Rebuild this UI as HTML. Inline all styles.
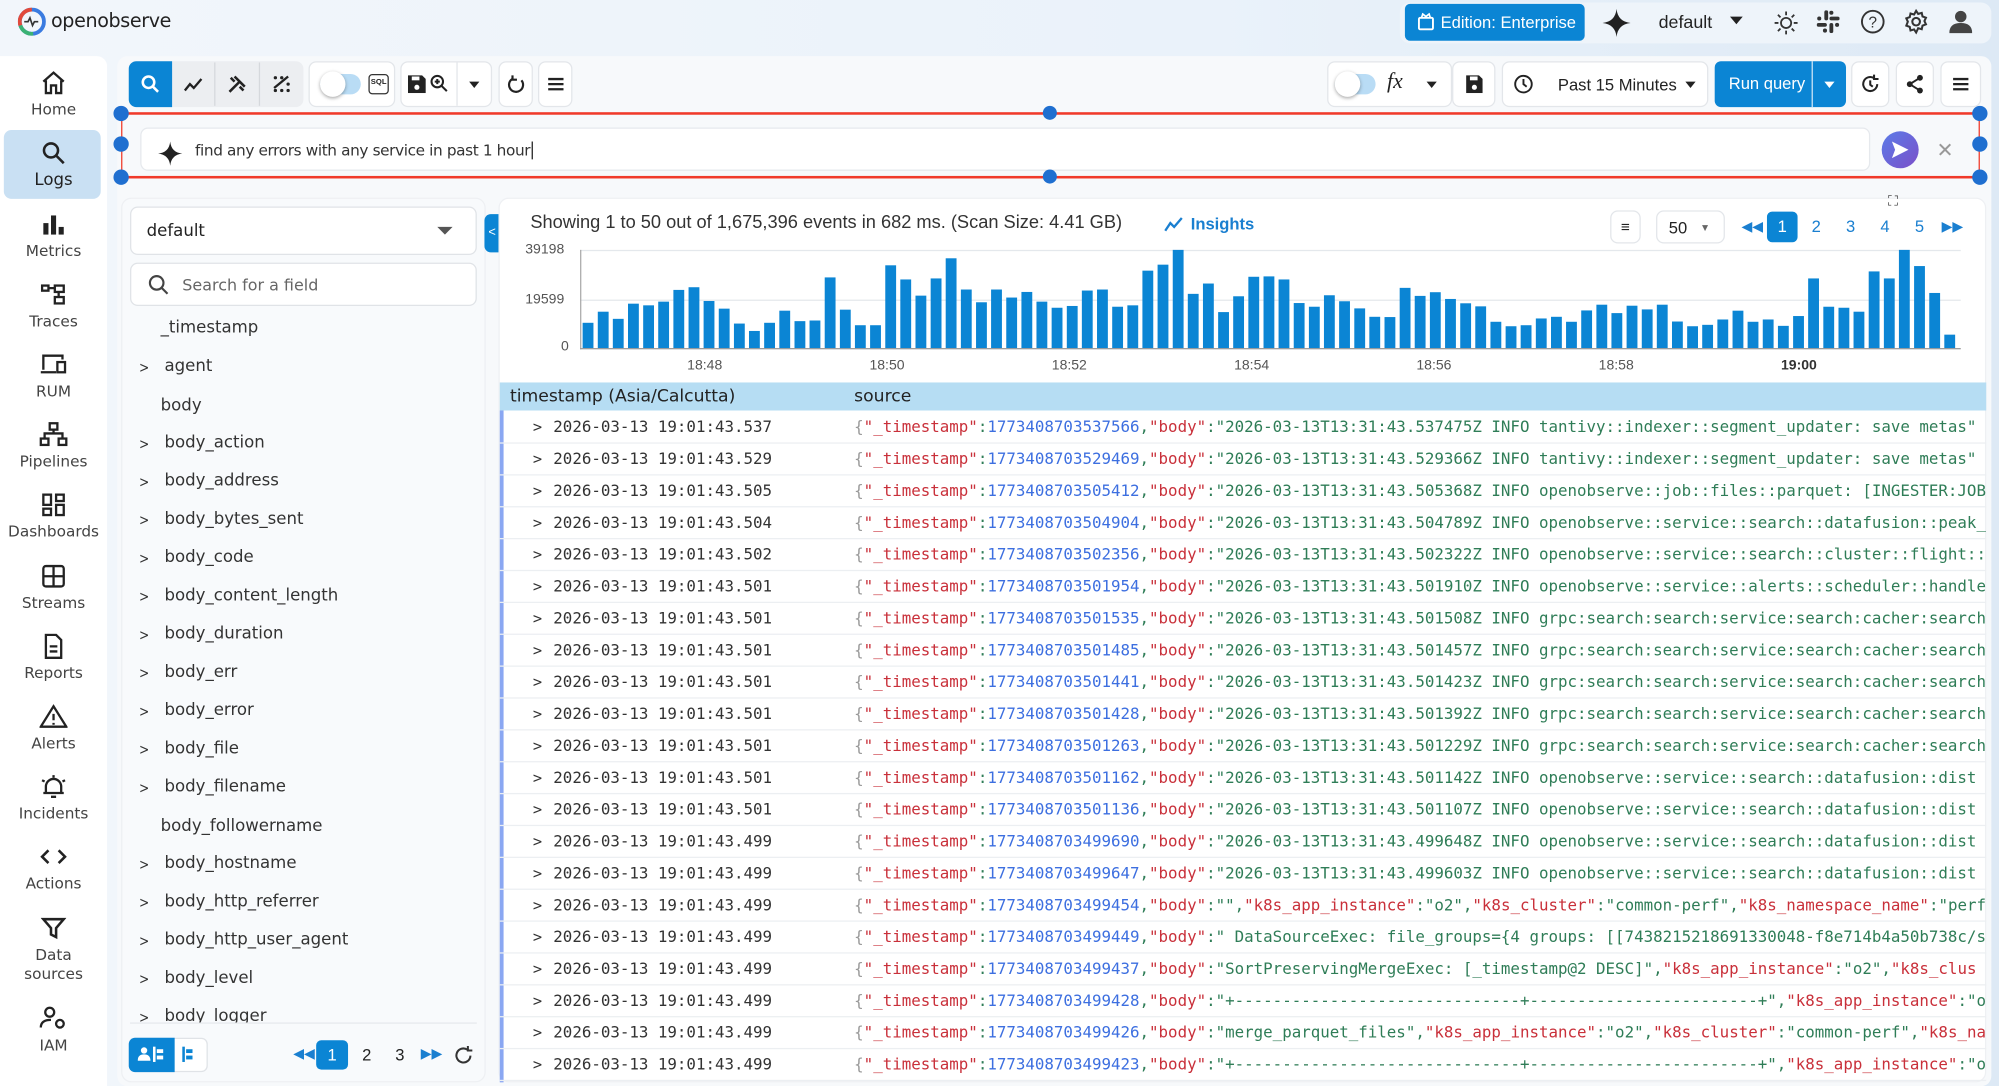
<!DOCTYPE html>
<html><head><meta charset="utf-8">
<style>
*{box-sizing:border-box;margin:0;padding:0}
html,body{width:1999px;height:1086px;overflow:hidden;background:#e9f1f9}
#w{position:absolute;left:0;top:0;width:1568px;height:852px;transform:scale(1.27487);transform-origin:0 0;font-family:"Liberation Sans","DejaVu Sans",sans-serif;color:#222;background:linear-gradient(90deg,#f2f6fb 0%,#eaf2fa 60%,#dde9f5 100%)}
.abs{position:absolute}
.card{position:absolute;background:#fff;border-radius:8px}
.nav{left:0;top:44;}
.ni{position:absolute;left:0;width:84px;text-align:center;font-size:12px;color:#444;font-family:"DejaVu Sans",sans-serif}
.ni svg{display:block;margin:0 auto 4px}
.btn{position:absolute;border:1px solid #e3e6ea;border-radius:6px;background:#fff;display:flex;align-items:center;justify-content:center}
.fld{position:absolute;left:126px;font-size:13px;font-family:"DejaVu Sans",sans-serif;color:#333}
.chev{position:absolute;left:108px;font-size:12px;color:#333;font-family:"DejaVu Sans",sans-serif;transform:scaleX(.8)}
.row{position:absolute;left:392px;width:1166px;height:25px;border-bottom:1px solid #eceff2;font-family:"DejaVu Sans Mono",monospace;font-size:12.4px;white-space:nowrap;overflow:hidden;line-height:24px}
.row .t{position:absolute;left:42px;color:#333}
.row .a{position:absolute;left:26px;color:#333;font-size:12px}
.row .s{position:absolute;left:278px;color:#2f7d57}
.k{color:#c9303a}.n{color:#3d6fe0}.g{color:#999}
.pg{position:absolute;font-size:13px;color:#1a7fd0}
</style></head><body><div id="w">

<!-- top bar -->
<svg class="abs" style="left:14px;top:6px" width="22" height="22" viewBox="0 0 22 22"><circle cx="11" cy="11" r="9.5" fill="none" stroke="#3a7be0" stroke-width="3"/><path d="M11 1.5A9.5 9.5 0 0 0 2 14" fill="none" stroke="#e24a3b" stroke-width="3"/><path d="M2 14A9.5 9.5 0 0 0 12 20.5" fill="none" stroke="#3bb273" stroke-width="3"/><path d="M5 11h3l1.5-3 2 6 1.5-3h3" fill="none" stroke="#333" stroke-width="1.3"/></svg>
<div class="abs" style="left:40px;top:7px;font-size:15px;font-family:'DejaVu Sans',sans-serif;color:#222;letter-spacing:-.3px">openobserve</div>

<div class="abs" style="left:1098px;top:2px;width:464px;height:32px;background:#eef4fa;border-radius:8px"></div>
<div class="abs" style="left:1102px;top:3px;width:141px;height:29px;background:#0b85d4;border-radius:4px;color:#fff;font-size:13px;line-height:29px;padding-left:28px">Edition: Enterprise</div>
<svg class="abs" style="left:1112px;top:10px" width="13" height="14" viewBox="0 0 13 14"><rect x="1" y="4" width="11" height="9" rx="1" fill="none" stroke="#fff" stroke-width="1.5"/><path d="M3 4l1-3 2.5 2L9 1l1 3" fill="none" stroke="#fff" stroke-width="1.3"/></svg>
<svg class="abs" style="left:1257px;top:7px" width="22" height="22" viewBox="0 0 22 22"><path d="M11 0Q12 10 22 11Q12 12 11 22Q10 12 0 11Q10 10 11 0Z" fill="#222"/></svg>
<div class="abs" style="left:1301px;top:9px;font-size:14px;color:#222">default</div>
<div class="abs" style="left:1357px;top:13px;border:5px solid transparent;border-top:6px solid #222"></div>
<svg class="abs" style="left:1391px;top:8px" width="20" height="20" viewBox="0 0 20 20" stroke="#333" fill="none" stroke-width="1.4"><circle cx="10" cy="10" r="4"/><path d="M10 1v3M10 16v3M1 10h3M16 10h3M3.6 3.6l2 2M14.4 14.4l2 2M3.6 16.4l2-2M14.4 5.6l2-2"/></svg>
<svg class="abs" style="left:1425px;top:8px" width="18" height="18" viewBox="0 0 18 18" fill="#333"><rect x="6" y="0" width="3" height="8" rx="1.5"/><rect x="10" y="10" width="3" height="8" rx="1.5"/><rect x="0" y="10" width="8" height="3" rx="1.5"/><rect x="10" y="5" width="8" height="3" rx="1.5"/><circle cx="2" cy="6.5" r="1.6"/><circle cx="16" cy="11.5" r="1.6"/><circle cx="11.5" cy="2" r="1.6"/><circle cx="6.5" cy="16" r="1.6"/></svg>
<svg class="abs" style="left:1459px;top:7px" width="20" height="20" viewBox="0 0 20 20"><circle cx="10" cy="10" r="8.5" fill="none" stroke="#333" stroke-width="1.5"/><text x="10" y="14.5" font-size="12" text-anchor="middle" fill="#333" font-family="Liberation Sans">?</text></svg>
<svg class="abs" style="left:1493px;top:7px" width="20" height="20" viewBox="0 0 20 20" fill="none" stroke="#333" stroke-width="1.6"><circle cx="10" cy="10" r="3"/><path d="M10 1.5l1.6 2.4 2.8-.8.6 2.8 2.7 1-1.2 2.6 1.2 2.6-2.7 1-.6 2.8-2.8-.8L10 18.5l-1.6-2.4-2.8.8-.6-2.8-2.7-1L3.500 10 2.3 7.400l2.7-1 .6-2.800 2.8.8z"/></svg>
<svg class="abs" style="left:1529px;top:7px" width="18" height="20" viewBox="0 0 18 20" fill="#444"><circle cx="9" cy="6" r="4.5"/><path d="M0 19Q0 11 9 11Q18 11 18 19Z"/></svg>

<!-- left nav -->
<div class="card" style="left:0;top:44px;width:84px;height:808px;border-radius:0 8px 0 0"></div>
<div class="abs" style="left:3px;top:102px;width:76px;height:54px;background:#c9e0f3;border-radius:6px"></div>
<div class="ni" style="top:55px"><svg width="20" height="20" viewBox="0 0 20 20" fill="none" stroke="#222" stroke-width="1.8"><path d="M2 9L10 2l8 7M4 8v10h4v-6h4v6h4V8"/></svg>Home</div>
<div class="ni" style="top:110px;font-size:13px;color:#222"><svg width="20" height="20" viewBox="0 0 20 20" fill="none" stroke="#222" stroke-width="2"><circle cx="8" cy="8" r="5.5"/><path d="M12 12l6 6"/></svg>Logs</div>
<div class="ni" style="top:166px"><svg width="20" height="20" viewBox="0 0 20 20" fill="#222"><rect x="2" y="9" width="4" height="9"/><rect x="8" y="3" width="4" height="15"/><rect x="14" y="12" width="4" height="6"/></svg>Metrics</div>
<div class="ni" style="top:221px"><svg width="20" height="20" viewBox="0 0 20 20" fill="none" stroke="#222" stroke-width="1.8"><rect x="1" y="3" width="5" height="4"/><rect x="11" y="3" width="7" height="5"/><rect x="11" y="12" width="7" height="5"/><path d="M6 5h5M14 8v4"/></svg>Traces</div>
<div class="ni" style="top:276px"><svg width="22" height="20" viewBox="0 0 22 20" fill="none" stroke="#222" stroke-width="1.8"><path d="M3 14V3h15v3M1 16h12"/><rect x="14" y="8" width="6" height="8"/></svg>RUM</div>
<div class="ni" style="top:331px"><svg width="22" height="20" viewBox="0 0 22 20" fill="none" stroke="#222" stroke-width="1.8"><rect x="8" y="1" width="6" height="5"/><rect x="1" y="13" width="6" height="5"/><rect x="15" y="13" width="6" height="5"/><path d="M11 6v3M4 13V9h14v4"/></svg>Pipelines</div>
<div class="ni" style="top:386px"><svg width="20" height="20" viewBox="0 0 20 20" fill="none" stroke="#222" stroke-width="1.8"><rect x="2" y="2" width="6" height="8"/><rect x="12" y="2" width="6" height="5"/><rect x="2" y="13" width="6" height="5"/><rect x="12" y="10" width="6" height="8"/></svg>Dashboards</div>
<div class="ni" style="top:442px"><svg width="20" height="20" viewBox="0 0 20 20" fill="none" stroke="#222" stroke-width="1.8"><rect x="2" y="2" width="16" height="16" rx="2"/><path d="M10 2v16M2 10h16"/></svg>Streams</div>
<div class="ni" style="top:497px"><svg width="20" height="20" viewBox="0 0 20 20" fill="none" stroke="#222" stroke-width="1.8"><path d="M4 1h8l4 4v14H4z"/><path d="M7 10h6M7 14h6"/></svg>Reports</div>
<div class="ni" style="top:552px"><svg width="22" height="20" viewBox="0 0 22 20" fill="none" stroke="#222" stroke-width="1.8"><path d="M11 2L1 18h20z"/><path d="M11 8v5M11 15v1.5"/></svg>Alerts</div>
<div class="ni" style="top:607px"><svg width="22" height="20" viewBox="0 0 22 20" fill="none" stroke="#222" stroke-width="1.8"><path d="M5 15V10a6 6 0 0 1 12 0v5H3h16M9 18h4M2 5l2 1M20 5l-2 1M11 1v2"/></svg>Incidents</div>
<div class="ni" style="top:662px"><svg width="22" height="20" viewBox="0 0 22 20" fill="none" stroke="#222" stroke-width="2"><path d="M7 5l-5 5 5 5M15 5l5 5-5 5"/></svg>Actions</div>
<div class="ni" style="top:718px;line-height:15px"><svg width="20" height="20" viewBox="0 0 20 20" fill="none" stroke="#222" stroke-width="2"><path d="M2 3h16l-6 7v7l-4 -2v-5z"/></svg>Data<br>sources</div>
<div class="ni" style="top:789px"><svg width="22" height="20" viewBox="0 0 22 20" fill="none" stroke="#222" stroke-width="1.8"><circle cx="8" cy="5" r="3.5"/><path d="M1 17q0-6 8-6"/><circle cx="16" cy="14" r="3"/></svg>IAM</div>

<!-- main card -->
<div class="card" style="left:92px;top:44px;width:1470px;height:808px;background:#f7f9fb"></div>
<!-- toolbar -->
<div class="abs" style="left:101px;top:48px;width:137px;height:36px;background:#eceef1;border-radius:6px"></div>
<div class="abs" style="left:101px;top:48px;width:34px;height:36px;background:#0b85d4;border-radius:6px 0 0 6px"></div>
<svg class="abs" style="left:110px;top:58px" width="16" height="16" viewBox="0 0 16 16" fill="none" stroke="#fff" stroke-width="2"><circle cx="6.5" cy="6.5" r="4.5"/><path d="M10 10l4 4"/></svg>
<svg class="abs" style="left:144px;top:59px" width="16" height="14" viewBox="0 0 16 14" fill="none" stroke="#222" stroke-width="1.8"><path d="M1 12l4-5 3 3 6-7"/></svg>
<div class="abs" style="left:168px;top:49px;width:1px;height:34px;background:#d5d8dc"></div>
<div class="abs" style="left:203px;top:49px;width:1px;height:34px;background:#d5d8dc"></div>
<svg class="abs" style="left:178px;top:58px" width="16" height="16" viewBox="0 0 16 16" fill="none" stroke="#222" stroke-width="2"><path d="M2 14L10 6M6 2l8 8M3 3l3 3M13 13l-3-3"/></svg>
<svg class="abs" style="left:213px;top:58px" width="16" height="16" viewBox="0 0 16 16" fill="#222"><circle cx="3" cy="3" r="1.3"/><circle cx="8" cy="3" r="1.3"/><circle cx="13" cy="8" r="1.3"/><circle cx="3" cy="13" r="1.3"/><circle cx="8" cy="13" r="1.3"/><circle cx="13" cy="13" r="1.3"/><path d="M2 11L13 2" stroke="#222" stroke-width="1.8"/></svg>
<div class="btn" style="left:242px;top:48px;width:68px;height:36px"></div>
<div class="abs" style="left:251px;top:58px;width:32px;height:16px;background:#b9dcf5;border-radius:8px"></div>
<div class="abs" style="left:251px;top:56px;width:20px;height:20px;background:#fff;border-radius:50%;box-shadow:0 1px 3px rgba(0,0,0,.35)"></div>
<div class="abs" style="left:289px;top:58px;width:16px;height:16px;border:1.5px solid #333;border-radius:3px;font-size:6px;line-height:13px;text-align:center;font-weight:bold">SQL</div>
<div class="btn" style="left:314px;top:48px;width:72px;height:36px"></div>
<div class="abs" style="left:358px;top:49px;width:1px;height:34px;background:#e3e6ea"></div>
<svg class="abs" style="left:320px;top:59px" width="14" height="14" viewBox="0 0 14 14"><path d="M0 0h11l3 3v11H0z" fill="#222"/><rect x="3" y="1" width="6" height="3" fill="#fff"/><circle cx="7" cy="9.5" r="2" fill="#fff"/></svg>
<svg class="abs" style="left:337px;top:58px" width="15" height="15" viewBox="0 0 15 15" fill="none" stroke="#222" stroke-width="1.6"><circle cx="6" cy="6" r="4.5"/><path d="M9.5 9.5l4 4M6 4v4M4 6h4"/></svg>
<div class="abs" style="left:368px;top:64px;border:4px solid transparent;border-top:5px solid #222"></div>
<div class="btn" style="left:391px;top:48px;width:27px;height:36px"><svg width="14" height="14" viewBox="0 0 14 14" fill="none" stroke="#222" stroke-width="1.7"><path d="M11 4A5.5 5.5 0 1 1 4 2.8M4 0v3.5H7.5"/></svg></div>
<div class="btn" style="left:422px;top:48px;width:27px;height:36px"><svg width="14" height="12" viewBox="0 0 14 12" stroke="#222" stroke-width="1.8"><path d="M1 2h12M1 6h12M1 10h12"/></svg></div>

<div class="btn" style="left:1041px;top:48px;width:98px;height:36px"></div>
<div class="abs" style="left:1047px;top:58px;width:32px;height:16px;background:#b9dcf5;border-radius:8px"></div>
<div class="abs" style="left:1047px;top:56px;width:20px;height:20px;background:#fff;border-radius:50%;box-shadow:0 1px 3px rgba(0,0,0,.35)"></div>
<div class="abs" style="left:1088px;top:54px;font-family:'Liberation Serif',serif;font-style:italic;font-size:17px">fx</div>
<div class="abs" style="left:1119px;top:64px;border:4px solid transparent;border-top:5px solid #222"></div>
<div class="btn" style="left:1139px;top:48px;width:34px;height:36px"><svg width="13" height="14" viewBox="0 0 13 14"><path d="M0 0h10l3 3v11H0z" fill="#222"/><rect x="3" y="1" width="6" height="3" fill="#fff"/><circle cx="6.5" cy="9.5" r="2" fill="#fff"/></svg></div>
<div class="btn" style="left:1178px;top:48px;width:162px;height:36px;justify-content:flex-start;padding-left:8px"><svg width="16" height="16" viewBox="0 0 16 16" fill="none" stroke="#222" stroke-width="1.5"><circle cx="8" cy="8" r="6.5"/><path d="M8 4v4l2.5 2"/></svg><span style="margin-left:19px;font-size:13px">Past 15 Minutes</span></div>
<div class="abs" style="left:1322px;top:64px;border:4px solid transparent;border-top:5px solid #222"></div>
<div class="abs" style="left:1345px;top:48px;width:103px;height:36px;background:#0b85d4;border-radius:5px;color:#fff;font-size:13px;line-height:36px;padding-left:11px">Run query</div>
<div class="abs" style="left:1421px;top:48px;width:1px;height:36px;background:#cfe6f7"></div>
<div class="abs" style="left:1431px;top:64px;border:4px solid transparent;border-top:5px solid #fff"></div>
<div class="btn" style="left:1452px;top:48px;width:30px;height:36px"><svg width="16" height="16" viewBox="0 0 16 16" fill="none" stroke="#222" stroke-width="1.6"><path d="M13.5 8A5.5 5.5 0 1 1 11 3.3M11 0.5v3.5h3.5M8 5v3.5l2 1.5"/></svg></div>
<div class="btn" style="left:1487px;top:48px;width:30px;height:36px"><svg width="14" height="16" viewBox="0 0 14 16" fill="#222"><circle cx="11" cy="3" r="2.3"/><circle cx="3" cy="8" r="2.3"/><circle cx="11" cy="13" r="2.3"/><path d="M11 3L3 8l8 5" stroke="#222" stroke-width="1.5" fill="none"/></svg></div>
<div class="btn" style="left:1522px;top:48px;width:32px;height:36px"><svg width="14" height="12" viewBox="0 0 14 12" stroke="#222" stroke-width="1.8"><path d="M1 2h12M1 6h12M1 10h12"/></svg></div>

<!-- AI bar -->
<div class="abs" style="left:95px;top:88px;width:1458px;height:2px;background:#f03a2a"></div>
<div class="abs" style="left:95px;top:138px;width:1458px;height:2px;background:#f03a2a"></div>
<div class="abs" style="left:95px;top:89px;width:1px;height:50px;background:#f03a2a"></div>
<div class="abs" style="left:1552px;top:89px;width:1px;height:50px;background:#f03a2a"></div>
<div class="abs" style="left:110px;top:100px;width:1357px;height:34px;background:#fff;border:1px solid #e6e9ed;border-radius:6px"></div>
<svg class="abs" style="left:124px;top:111px" width="19" height="19" viewBox="0 0 22 22"><path d="M11 0Q12 10 22 11Q12 12 11 22Q10 12 0 11Q10 10 11 0Z" fill="#222"/></svg>
<div class="abs" style="left:153px;top:111px;font-size:12px;color:#333;font-family:'DejaVu Sans',sans-serif;letter-spacing:-.3px">find any errors with any service in past 1 hour<span style="border-left:1px solid #222;margin-left:1px"></span></div>
<div class="abs" style="left:1476px;top:103px;width:29px;height:29px;border-radius:50%;background:linear-gradient(135deg,#5b7ce8,#7b4fc9)"></div>
<svg class="abs" style="left:1483px;top:110px" width="15" height="15" viewBox="0 0 15 15"><path d="M1 1l13 6.5L1 14l2.5-6.5z" fill="#fff"/></svg>
<div class="abs" style="left:1519px;top:108px;font-size:16px;color:#999">✕</div>
<div class="abs" style="left:89px;top:83px;width:12px;height:12px;border-radius:50%;background:#1f6fd0"></div>
<div class="abs" style="left:89px;top:107px;width:12px;height:12px;border-radius:50%;background:#1f6fd0"></div>
<div class="abs" style="left:89px;top:133px;width:12px;height:12px;border-radius:50%;background:#1f6fd0"></div>
<div class="abs" style="left:818px;top:83px;width:11px;height:11px;border-radius:50%;background:#1f6fd0"></div>
<div class="abs" style="left:818px;top:133px;width:11px;height:11px;border-radius:50%;background:#1f6fd0"></div>
<div class="abs" style="left:1547px;top:83px;width:12px;height:12px;border-radius:50%;background:#1f6fd0"></div>
<div class="abs" style="left:1547px;top:107px;width:12px;height:12px;border-radius:50%;background:#1f6fd0"></div>
<div class="abs" style="left:1547px;top:133px;width:12px;height:12px;border-radius:50%;background:#1f6fd0"></div>

<!-- field panel -->
<div class="card" style="left:95px;top:155px;width:286px;height:694px;background:#f8fafc;border:1px solid #eef0f3"></div>
<div class="abs" style="left:102px;top:162px;width:272px;height:38px;background:#fff;border:1px solid #e0e3e7;border-radius:6px;font-size:13px;line-height:38px;padding-left:12px;font-family:'DejaVu Sans',sans-serif">default</div>
<div class="abs" style="left:343px;top:178px;border:6px solid transparent;border-top:6px solid #555"></div>
<div class="abs" style="left:102px;top:206px;width:272px;height:34px;background:#fff;border:1px solid #e0e3e7;border-radius:6px;font-size:12.5px;line-height:34px;padding-left:40px;color:#666;font-family:'DejaVu Sans',sans-serif">Search for a field</div>
<svg class="abs" style="left:116px;top:215px" width="17" height="17" viewBox="0 0 16 16" fill="none" stroke="#444" stroke-width="1.6"><circle cx="6.5" cy="6.5" r="5"/><path d="M10 10l4.5 4.5"/></svg>
<div class="abs" style="left:380px;top:168px;width:12px;height:30px;background:#0b85d4;border-radius:5px 0 0 5px;color:#fff;font-size:10px;line-height:30px;text-align:center">&lt;</div>

<div class="fld" style="top:250px">_timestamp</div>
<div class="chev" style="top:281px">&gt;</div><div class="fld" style="top:280px;left:129px">agent</div>
<div class="fld" style="top:311px">body</div>
<div class="chev" style="top:341px">&gt;</div><div class="fld" style="top:340px;left:129px">body_action</div>
<div class="chev" style="top:371px">&gt;</div><div class="fld" style="top:370px;left:129px">body_address</div>
<div class="chev" style="top:401px">&gt;</div><div class="fld" style="top:400px;left:129px">body_bytes_sent</div>
<div class="chev" style="top:431px">&gt;</div><div class="fld" style="top:430px;left:129px">body_code</div>
<div class="chev" style="top:461px">&gt;</div><div class="fld" style="top:460px;left:129px">body_content_length</div>
<div class="chev" style="top:491px">&gt;</div><div class="fld" style="top:490px;left:129px">body_duration</div>
<div class="chev" style="top:521px">&gt;</div><div class="fld" style="top:520px;left:129px">body_err</div>
<div class="chev" style="top:551px">&gt;</div><div class="fld" style="top:550px;left:129px">body_error</div>
<div class="chev" style="top:581px">&gt;</div><div class="fld" style="top:580px;left:129px">body_file</div>
<div class="chev" style="top:611px">&gt;</div><div class="fld" style="top:610px;left:129px">body_filename</div>
<div class="fld" style="top:641px">body_followername</div>
<div class="chev" style="top:671px">&gt;</div><div class="fld" style="top:670px;left:129px">body_hostname</div>
<div class="chev" style="top:701px">&gt;</div><div class="fld" style="top:700px;left:129px">body_http_referrer</div>
<div class="chev" style="top:731px">&gt;</div><div class="fld" style="top:730px;left:129px">body_http_user_agent</div>
<div class="chev" style="top:761px">&gt;</div><div class="fld" style="top:760px;left:129px">body_level</div>
<div class="abs" style="left:100px;top:790px;width:276px;height:12px;overflow:hidden"><div class="chev" style="left:8px;top:1px">&gt;</div><div class="fld" style="top:0;left:29px">body_logger</div></div>
<div class="abs" style="left:102px;top:802px;width:272px;height:1px;background:#e6e9ed"></div>
<div class="abs" style="left:101px;top:814px;width:62px;height:27px;border:1px solid #e0e3e7;border-radius:5px;background:#fff"></div>
<div class="abs" style="left:101px;top:814px;width:36px;height:27px;background:#0b85d4;border-radius:5px 0 0 5px"></div>
<svg class="abs" style="left:108px;top:820px" width="24" height="14" viewBox="0 0 24 14" fill="#fff"><circle cx="5" cy="4" r="2.5"/><path d="M0 12q0-5 5-5t5 5z"/><rect x="12" y="1" width="2" height="12"/><rect x="15" y="3" width="5" height="3"/><rect x="15" y="8" width="5" height="3"/></svg>
<svg class="abs" style="left:142px;top:820px" width="12" height="14" viewBox="0 0 12 14" fill="#0b85d4"><rect x="1" y="1" width="2" height="12"/><rect x="4" y="3" width="5" height="3"/><rect x="4" y="8" width="5" height="3"/></svg>
<div class="pg" style="left:230px;top:820px;font-size:11px">◀◀</div>
<div class="abs" style="left:248px;top:816px;width:25px;height:23px;background:#0b85d4;border-radius:4px;color:#fff;font-size:13px;line-height:23px;text-align:center">1</div>
<div class="abs" style="left:284px;top:820px;font-size:13px">2</div>
<div class="abs" style="left:310px;top:820px;font-size:13px">3</div>
<div class="pg" style="left:330px;top:820px;font-size:11px">▶▶</div>
<svg class="abs" style="left:356px;top:820px" width="16" height="16" viewBox="0 0 16 16" fill="none" stroke="#333" stroke-width="1.6"><path d="M13 8A5.5 5.5 0 1 1 10.5 3.3M11 0.5v3.5h3.5"/></svg>

<!-- results panel -->
<div class="card" style="left:391px;top:155px;width:1167px;height:694px;border:1px solid #eef0f3"></div>
<div class="abs" style="left:416px;top:167px;font-size:14.3px;color:#333">Showing 1 to 50 out of 1,675,396 events in 682 ms. (Scan Size: 4.41 GB)</div>
<svg class="abs" style="left:913px;top:170px" width="16" height="13" viewBox="0 0 16 13" fill="none" stroke="#1a7fd0" stroke-width="1.8"><path d="M1 11l4-6 3 3 6-7"/></svg>
<div class="abs" style="left:934px;top:168px;font-size:13px;color:#1a7fd0;font-weight:bold">Insights</div>
<div class="abs" style="left:1481px;top:152px;font-size:11px;color:#333">⛶</div>
<div class="btn" style="left:1263px;top:165px;width:24px;height:26px;font-size:12px">≡</div>
<div class="btn" style="left:1299px;top:165px;width:54px;height:26px;justify-content:flex-start;padding-left:9px;font-size:13px">50<span style="margin-left:10px;font-size:8px;color:#666">▼</span></div>
<div class="pg" style="left:1366px;top:171px;font-size:11px">◀◀</div>
<div class="abs" style="left:1386px;top:166px;width:24px;height:24px;background:#0b85d4;border-radius:4px;color:#fff;font-size:13px;line-height:24px;text-align:center">1</div>
<div class="pg" style="left:1421px;top:170px">2</div>
<div class="pg" style="left:1448px;top:170px">3</div>
<div class="pg" style="left:1475px;top:170px">4</div>
<div class="pg" style="left:1502px;top:170px">5</div>
<div class="pg" style="left:1523px;top:171px;font-size:11px">▶▶</div>

<!-- chart -->
<div class="abs" style="left:412px;top:190px;font-size:11px;color:#555">39198</div>
<div class="abs" style="left:412px;top:229px;font-size:11px;color:#555">19599</div>
<div class="abs" style="left:440px;top:266px;font-size:11px;color:#555">0</div>
<div class="abs" style="left:455px;top:196px;width:1083px;height:1px;background:#e4e8ec"></div>
<div class="abs" style="left:455px;top:235px;width:1083px;height:1px;background:#e4e8ec"></div>
<div class="abs" style="left:455px;top:196px;width:1px;height:78px;background:#aaa"></div>
<div class="abs" style="left:455px;top:273px;width:1083px;height:1px;background:#999"></div>
<svg id="bars" class="abs" style="left:455px;top:190px" width="1083" height="84"></svg>
<div class="abs" style="left:539px;top:281px;width:1000px;height:14px;font-size:11px;color:#555">
<span class="abs" style="left:0">18:48</span><span class="abs" style="left:143px">18:50</span><span class="abs" style="left:286px">18:52</span><span class="abs" style="left:429px">18:54</span><span class="abs" style="left:572px">18:56</span><span class="abs" style="left:715px">18:58</span><span class="abs" style="left:858px;font-weight:bold;color:#333">19:00</span></div>

<!-- table -->
<div class="abs" style="left:392px;top:300px;width:1166px;height:22px;background:#b6ddf3"></div>
<div class="abs" style="left:400px;top:303px;font-size:13.5px;color:#222;font-family:'DejaVu Sans',sans-serif">timestamp (Asia/Calcutta)</div>
<div class="abs" style="left:670px;top:303px;font-size:13.5px;color:#222;font-family:'DejaVu Sans',sans-serif">source</div>
<div class="abs" style="left:392px;top:322px;width:3px;height:527px;background:#8aa7f2"></div>

<div class="row" style="top:323px"><span class="a">&gt;</span><span class="t">2026-03-13 19:01:43.537</span><span class="s"><span class="g">{</span><span class="k">"_timestamp"</span>:<span class="n">1773408703537566</span>,<span class="k">"body"</span>:"2026-03-13T13:31:43.537475Z INFO tantivy::indexer::segment_updater: save metas"</span></div>
<div class="row" style="top:348px"><span class="a">&gt;</span><span class="t">2026-03-13 19:01:43.529</span><span class="s"><span class="g">{</span><span class="k">"_timestamp"</span>:<span class="n">1773408703529469</span>,<span class="k">"body"</span>:"2026-03-13T13:31:43.529366Z INFO tantivy::indexer::segment_updater: save metas"</span></div>
<div class="row" style="top:373px"><span class="a">&gt;</span><span class="t">2026-03-13 19:01:43.505</span><span class="s"><span class="g">{</span><span class="k">"_timestamp"</span>:<span class="n">1773408703505412</span>,<span class="k">"body"</span>:"2026-03-13T13:31:43.505368Z INFO openobserve::job::files::parquet: [INGESTER:JOB</span></div>
<div class="row" style="top:398px"><span class="a">&gt;</span><span class="t">2026-03-13 19:01:43.504</span><span class="s"><span class="g">{</span><span class="k">"_timestamp"</span>:<span class="n">1773408703504904</span>,<span class="k">"body"</span>:"2026-03-13T13:31:43.504789Z INFO openobserve::service::search::datafusion::peak_</span></div>
<div class="row" style="top:423px"><span class="a">&gt;</span><span class="t">2026-03-13 19:01:43.502</span><span class="s"><span class="g">{</span><span class="k">"_timestamp"</span>:<span class="n">1773408703502356</span>,<span class="k">"body"</span>:"2026-03-13T13:31:43.502322Z INFO openobserve::service::search::cluster::flight::</span></div>
<div class="row" style="top:448px"><span class="a">&gt;</span><span class="t">2026-03-13 19:01:43.501</span><span class="s"><span class="g">{</span><span class="k">"_timestamp"</span>:<span class="n">1773408703501954</span>,<span class="k">"body"</span>:"2026-03-13T13:31:43.501910Z INFO openobserve::service::alerts::scheduler::handle</span></div>
<div class="row" style="top:473px"><span class="a">&gt;</span><span class="t">2026-03-13 19:01:43.501</span><span class="s"><span class="g">{</span><span class="k">"_timestamp"</span>:<span class="n">1773408703501535</span>,<span class="k">"body"</span>:"2026-03-13T13:31:43.501508Z INFO grpc:search:search:service:search:cacher:search</span></div>
<div class="row" style="top:498px"><span class="a">&gt;</span><span class="t">2026-03-13 19:01:43.501</span><span class="s"><span class="g">{</span><span class="k">"_timestamp"</span>:<span class="n">1773408703501485</span>,<span class="k">"body"</span>:"2026-03-13T13:31:43.501457Z INFO grpc:search:search:service:search:cacher:search</span></div>
<div class="row" style="top:523px"><span class="a">&gt;</span><span class="t">2026-03-13 19:01:43.501</span><span class="s"><span class="g">{</span><span class="k">"_timestamp"</span>:<span class="n">1773408703501441</span>,<span class="k">"body"</span>:"2026-03-13T13:31:43.501423Z INFO grpc:search:search:service:search:cacher:search</span></div>
<div class="row" style="top:548px"><span class="a">&gt;</span><span class="t">2026-03-13 19:01:43.501</span><span class="s"><span class="g">{</span><span class="k">"_timestamp"</span>:<span class="n">1773408703501428</span>,<span class="k">"body"</span>:"2026-03-13T13:31:43.501392Z INFO grpc:search:search:service:search:cacher:search</span></div>
<div class="row" style="top:573px"><span class="a">&gt;</span><span class="t">2026-03-13 19:01:43.501</span><span class="s"><span class="g">{</span><span class="k">"_timestamp"</span>:<span class="n">1773408703501263</span>,<span class="k">"body"</span>:"2026-03-13T13:31:43.501229Z INFO grpc:search:search:service:search:cacher:search</span></div>
<div class="row" style="top:598px"><span class="a">&gt;</span><span class="t">2026-03-13 19:01:43.501</span><span class="s"><span class="g">{</span><span class="k">"_timestamp"</span>:<span class="n">1773408703501162</span>,<span class="k">"body"</span>:"2026-03-13T13:31:43.501142Z INFO openobserve::service::search::datafusion::dist</span></div>
<div class="row" style="top:623px"><span class="a">&gt;</span><span class="t">2026-03-13 19:01:43.501</span><span class="s"><span class="g">{</span><span class="k">"_timestamp"</span>:<span class="n">1773408703501136</span>,<span class="k">"body"</span>:"2026-03-13T13:31:43.501107Z INFO openobserve::service::search::datafusion::dist</span></div>
<div class="row" style="top:648px"><span class="a">&gt;</span><span class="t">2026-03-13 19:01:43.499</span><span class="s"><span class="g">{</span><span class="k">"_timestamp"</span>:<span class="n">1773408703499690</span>,<span class="k">"body"</span>:"2026-03-13T13:31:43.499648Z INFO openobserve::service::search::datafusion::dist</span></div>
<div class="row" style="top:673px"><span class="a">&gt;</span><span class="t">2026-03-13 19:01:43.499</span><span class="s"><span class="g">{</span><span class="k">"_timestamp"</span>:<span class="n">1773408703499647</span>,<span class="k">"body"</span>:"2026-03-13T13:31:43.499603Z INFO openobserve::service::search::datafusion::dist</span></div>
<div class="row" style="top:698px"><span class="a">&gt;</span><span class="t">2026-03-13 19:01:43.499</span><span class="s"><span class="g">{</span><span class="k">"_timestamp"</span>:<span class="n">1773408703499454</span>,<span class="k">"body"</span>:"",<span class="k">"k8s_app_instance"</span>:"o2",<span class="k">"k8s_cluster"</span>:"common-perf",<span class="k">"k8s_namespace_name"</span>:"perf"</span></div>
<div class="row" style="top:723px"><span class="a">&gt;</span><span class="t">2026-03-13 19:01:43.499</span><span class="s"><span class="g">{</span><span class="k">"_timestamp"</span>:<span class="n">1773408703499449</span>,<span class="k">"body"</span>:" DataSourceExec: file_groups={4 groups: [[7438215218691330048-f8e714b4a50b738c/s</span></div>
<div class="row" style="top:748px"><span class="a">&gt;</span><span class="t">2026-03-13 19:01:43.499</span><span class="s"><span class="g">{</span><span class="k">"_timestamp"</span>:<span class="n">1773408703499437</span>,<span class="k">"body"</span>:"SortPreservingMergeExec: [_timestamp@2 DESC]",<span class="k">"k8s_app_instance"</span>:"o2",<span class="k">"k8s_clus</span></span></div>
<div class="row" style="top:773px"><span class="a">&gt;</span><span class="t">2026-03-13 19:01:43.499</span><span class="s"><span class="g">{</span><span class="k">"_timestamp"</span>:<span class="n">1773408703499428</span>,<span class="k">"body"</span>:"+------------------------------+------------------------+",<span class="k">"k8s_app_instance"</span>:"o2"</span></div>
<div class="row" style="top:798px"><span class="a">&gt;</span><span class="t">2026-03-13 19:01:43.499</span><span class="s"><span class="g">{</span><span class="k">"_timestamp"</span>:<span class="n">1773408703499426</span>,<span class="k">"body"</span>:"merge_parquet_files",<span class="k">"k8s_app_instance"</span>:"o2",<span class="k">"k8s_cluster"</span>:"common-perf",<span class="k">"k8s_na</span></span></div>
<div class="row" style="top:823px"><span class="a">&gt;</span><span class="t">2026-03-13 19:01:43.499</span><span class="s"><span class="g">{</span><span class="k">"_timestamp"</span>:<span class="n">1773408703499423</span>,<span class="k">"body"</span>:"+------------------------------+------------------------+",<span class="k">"k8s_app_instance"</span>:"o2"</span></div>

</div>
<script>
var t=[400,367,388,343,348,337,302,294,335,358,402,424,400,364,395,393,265,361,407,407,229,271,319,268,208,301,339,301,325,308,337,355,350,304,301,352,348,245,227,183,314,283,368,321,263,262,271,341,352,318,336,357,382,383,296,320,309,329,342,351,397,410,407,387,382,397,363,346,371,349,360,346,396,410,406,390,364,397,390,409,380,268,352,355,367,247,268,183,231,311,435];
var s='',n=t.length,step=1080/n;
for(var i=0;i<n;i++){var h=(475-t[i])/292*77;s+='<rect x="'+(2+i*step).toFixed(1)+'" y="'+(83-h).toFixed(1)+'" width="'+(step*0.72).toFixed(1)+'" height="'+h.toFixed(1)+'" fill="#0b85d4"/>';}
document.getElementById('bars').innerHTML=s;
</script>
</body></html>
